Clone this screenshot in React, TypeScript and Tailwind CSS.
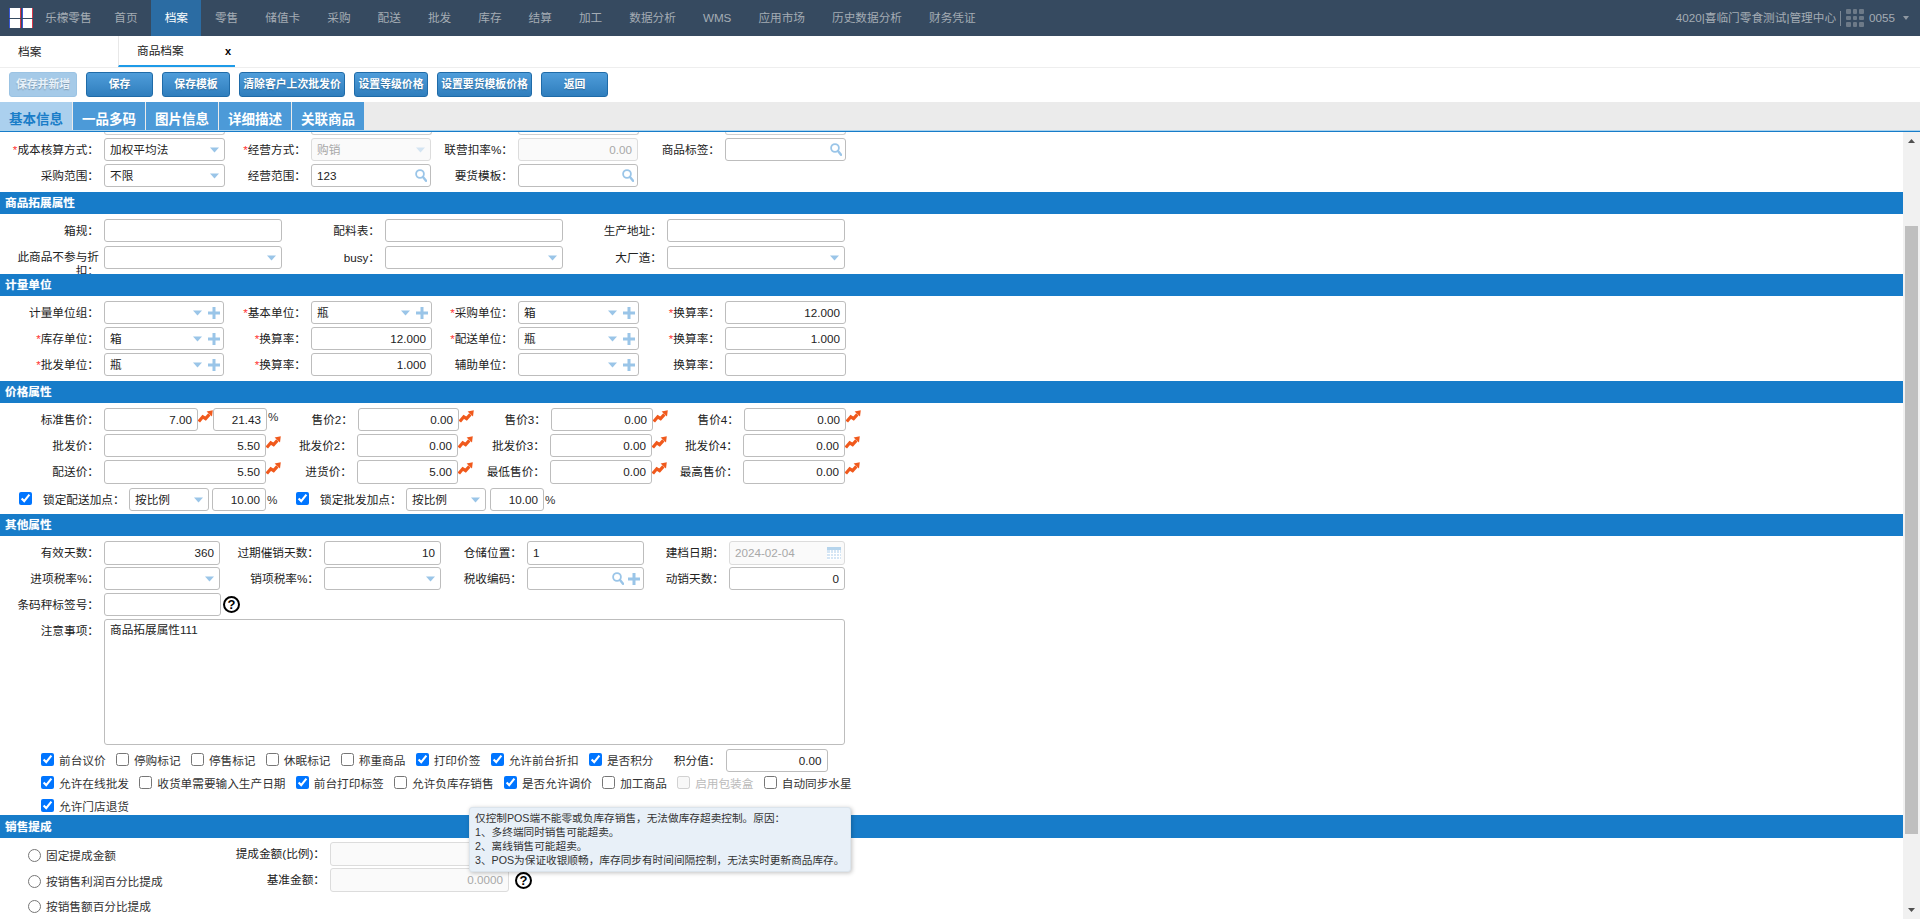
import React from "react";

const BLUE = "#9ac5e8";

function Caret({ light }: { light?: boolean }) {
  return (
    <svg width="9" height="6" viewBox="0 0 9 6" className="shrink-0">
      <path d="M0 0.5h9L4.5 5.5z" fill={light ? "#d3e4f2" : BLUE} />
    </svg>
  );
}
function Plus() {
  return (
    <svg width="12" height="12" viewBox="0 0 12 12" className="shrink-0 ml-[6px] -mr-[2px]">
      <path d="M4.5 0h3v4.5H12v3H7.5V12h-3V7.5H0v-3h4.5z" fill={BLUE} />
    </svg>
  );
}
function Search() {
  return (
    <svg width="12" height="13" viewBox="0 0 12 13" className="shrink-0 -mr-[2px]">
      <circle cx="5" cy="5" r="3.9" fill="none" stroke={BLUE} strokeWidth="1.8" />
      <path d="M8 8l3 3.8" stroke={BLUE} strokeWidth="2.4" strokeLinecap="round" />
    </svg>
  );
}
function Calendar() {
  return (
    <svg width="14" height="13" viewBox="0 0 14 13" className="shrink-0 -mr-[2px]">
      <rect width="14" height="13" fill="#d5e6f5" />
      <rect width="14" height="3" fill="#b5d4ec" />
      {[3, 6, 9, 12].map((x) => (
        <rect key={x} x={x} y="3" width="1" height="10" fill="#fff" />
      ))}
      {[6, 9, 12].map((y) => (
        <rect key={y} x="0" y={y} width="14" height="1" fill="#fff" />
      ))}
    </svg>
  );
}
function Trend() {
  return (
    <svg width="15" height="13" viewBox="0 0 15 13" className="shrink-0 self-start mt-[2px]">
      <path d="M0.8 11.6L4.8 6.8l2.8 1.8L11.4 4.4" fill="none" stroke="#f0591c" strokeWidth="3.2" />
      <path d="M8.6 1.6L14.8 0.2 14 6.4z" fill="#f0591c" />
    </svg>
  );
}
function Help() {
  return (
    <span className="w-[17px] h-[17px] shrink-0 rounded-full border-2 border-black flex items-center justify-center text-[13px] font-bold leading-none text-black">
      ?
    </span>
  );
}

function Inp({
  w,
  v,
  right,
  off,
  icons,
  h = "h-[23px]",
}: {
  w: string;
  v?: string;
  right?: boolean;
  off?: boolean;
  icons?: React.ReactNode;
  h?: string;
}) {
  return (
    <div
      className={`${w} ${h} shrink-0 flex items-center rounded-[3px] border px-[5px] ${
        off ? "border-[#dcdcdc] bg-[#fafafa] text-[#a8a8a8]" : "border-[#bdbdbd] bg-white text-[#222]"
      }`}
    >
      <span className={`flex-1 min-w-0 whitespace-nowrap ${right ? "text-right" : ""}`}>{v}</span>
      {icons && <span className="flex items-center shrink-0 ml-[4px]">{icons}</span>}
    </div>
  );
}

function F({ lw, t, req, children }: { lw: string; t: string; req?: boolean; children?: React.ReactNode }) {
  return (
    <>
      <div className={`${lw} mr-[5px] shrink-0 text-right leading-[14px] text-[#222]`}>
        {req && <span className="text-[#f33]">*</span>}
        {t}：
      </div>
      {children}
    </>
  );
}

function Header({ t, h = "h-[22px]", mt = "mt-[5px]" }: { t: string; h?: string; mt?: string }) {
  return (
    <div
      className={`relative z-10 ${h} ${mt} bg-[#177cc9] flex items-center pl-[5px] font-bold text-white [text-shadow:0_0_1px_rgba(255,255,255,0.4)]`}
    >
      {t}
    </div>
  );
}

function Row({ mt, children, h = "h-[23px]" }: { mt: string; children: React.ReactNode; h?: string }) {
  return <div className={`flex items-center ${h} ${mt}`}>{children}</div>;
}

function Ck({ t, on, off }: { t: string; on?: boolean; off?: boolean }) {
  return (
    <label className={`flex items-center gap-[5px] whitespace-nowrap ${off ? "text-[#bbb]" : "text-[#333]"}`}>
      <input type="checkbox" defaultChecked={on} disabled={off} className="w-[13px] h-[13px] mb-[3px] shrink-0" />
      <span>{t}</span>
    </label>
  );
}

function Radio({ t }: { t: string }) {
  return (
    <label className="w-[200px] shrink-0 pl-[28px] pt-[2px] flex items-center gap-[5px] text-[#333]">
      <input type="radio" name="commission" className="w-[13px] h-[13px] shrink-0" />
      <span className="mt-[1px]">{t}</span>
    </label>
  );
}

const navItems = ["首页", "档案", "零售", "储值卡", "采购", "配送", "批发", "库存", "结算", "加工", "数据分析", "WMS", "应用市场", "历史数据分析", "财务凭证"];
const buttons: [string, string][] = [
  ["保存", "w-[67px]"],
  ["保存模板", "w-[68px]"],
  ["清除客户上次批发价", "w-[106px]"],
  ["设置等级价格", "w-[74px]"],
  ["设置要货模板价格", "w-[95px]"],
  ["返回", "w-[67px]"],
];
const tabs = ["一品多码", "图片信息", "详细描述", "关联商品"];

export default function App() {
  return (
    <div className="h-[919px] w-[1920px] overflow-hidden flex flex-col bg-white text-[11.67px] text-[#222] [font-family:'Liberation_Sans','Noto_Sans_CJK_SC',sans-serif]">
      {/* top bar */}
      <div className="h-[36px] shrink-0 bg-[#364a60] flex items-center text-[#a4acb4]">
        <div className="w-[100.8px] shrink-0 flex items-center pl-[9px]">
          <div className="w-[24px] h-[20px] grid grid-cols-2 gap-[1px]">
            {[0, 1, 2, 3].map((i) => (
              <div key={i} className="bg-white border-l border-l-[#3a58d8] border-r border-r-[#d8384a]" />
            ))}
          </div>
          <span className="ml-[12px] whitespace-nowrap">乐檬零售</span>
        </div>
        {navItems.map((n) => (
          <div
            key={n}
            className={`h-full flex items-center px-[13.5px] whitespace-nowrap ${n === "档案" ? "bg-[#2b6ca3] text-white" : ""}`}
          >
            {n}
          </div>
        ))}
        <div className="ml-auto flex items-center pr-[11px]">
          <span className="whitespace-nowrap">4020|喜临门零食测试|管理中心</span>
          <span className="w-px h-[15px] bg-[#7d8996] ml-[4px] mr-[5px]" />
          <span className="grid grid-cols-3 gap-[2px] w-[18px] h-[18px]">
            {[0, 1, 2, 3, 4, 5, 6, 7, 8].map((i) => (
              <span key={i} className="bg-[#6d7a88] rounded-[1px]" />
            ))}
          </span>
          <span className="ml-[5px]">0055</span>
          <svg width="6" height="4" viewBox="0 0 6 4" className="ml-[8px]">
            <path d="M0 0h6L3 4z" fill="#8f98a2" />
          </svg>
        </div>
      </div>

      {/* page tabs */}
      <div className="h-[32px] shrink-0 flex border-b border-b-[#eeeeee] text-[#222]">
        <div className="w-[118px] flex items-center pl-[18px]">档案</div>
        <div className="w-[117px] flex items-center pl-[18px] border-l border-l-[#e8e8e8] border-b-2 border-b-[#1e9be8] relative">
          商品档案
          <span className="absolute right-[4px] top-[10px] text-[11px] font-bold text-black leading-none">x</span>
        </div>
      </div>

      {/* buttons */}
      <div className="h-[34px] shrink-0 flex items-start pt-[4px] pl-[9px] gap-[9px] text-[10.83px] font-bold text-white [text-shadow:0_1px_1px_rgba(0,0,0,0.25)]">
        <div className="w-[68px] h-[25px] flex items-center justify-center rounded-[3px] bg-[#a5cae8] border border-[#9bc3e3] text-[#e8f2fa]">
          保存并新增
        </div>
        {buttons.map(([t, w]) => (
          <div
            key={t}
            className={`${w} h-[25px] flex items-center justify-center whitespace-nowrap rounded-[3px] border border-[#1f6ba8] bg-gradient-to-b from-[#4f9dda] to-[#2f7ebd]`}
          >
            {t}
          </div>
        ))}
      </div>

      {/* section tabs */}
      <div className="h-[28px] shrink-0 flex bg-[#ebebeb] gap-[1px] text-[13.5px] font-bold leading-none">
        <div className="w-[72px] flex items-center justify-center pt-[8px] bg-[#abd0ee] text-[#1a7dc8]">基本信息</div>
        {tabs.map((t) => (
          <div key={t} className="w-[72px] flex items-center justify-center pt-[8px] bg-[#4c9ad8] text-white">
            {t}
          </div>
        ))}
      </div>
      <div className="h-[2px] shrink-0 border-t border-t-[#a9d3ee] bg-[#177cc9]" />

      {/* body */}
      <div className="flex-1 min-h-0 flex">
        <div className="relative flex-1 min-w-0 overflow-hidden">
          {/* partially scrolled row */}
          <div className="flex h-[3px] pl-[104px] gap-[86px]">
            {[0, 1, 2, 3].map((i) => (
              <div key={i} className="w-[121px] h-[3px] border border-t-0 border-[#cfcfcf] rounded-b-[3px]" />
            ))}
          </div>

          <Row mt="mt-[3px]">
            <F lw="w-[99px]" t="成本核算方式" req>
              <Inp w="w-[121px]" v="加权平均法" icons={<Caret />} />
            </F>
            <F lw="w-[81px]" t="经营方式" req>
              <Inp w="w-[120px]" v="购销" off icons={<Caret light />} />
            </F>
            <F lw="w-[82px]" t="联营扣率%">
              <Inp w="w-[120px]" v="0.00" right off />
            </F>
            <F lw="w-[82px]" t="商品标签">
              <Inp w="w-[121px]" icons={<Search />} />
            </F>
          </Row>
          <Row mt="mt-[3px]">
            <F lw="w-[99px]" t="采购范围">
              <Inp w="w-[121px]" v="不限" icons={<Caret />} />
            </F>
            <F lw="w-[81px]" t="经营范围">
              <Inp w="w-[120px]" v="123" icons={<Search />} />
            </F>
            <F lw="w-[82px]" t="要货模板">
              <Inp w="w-[120px]" icons={<Search />} />
            </F>
          </Row>

          <Header t="商品拓展属性" />
          <Row mt="mt-[5px]">
            <F lw="w-[99px]" t="箱规">
              <Inp w="w-[178px]" />
            </F>
            <F lw="w-[98px]" t="配料表">
              <Inp w="w-[178px]" />
            </F>
            <F lw="w-[99px]" t="生产地址">
              <Inp w="w-[178px]" />
            </F>
          </Row>
          <Row mt="mt-[4px]">
            <div className="w-[87px] ml-[12px] mr-[5px] shrink-0 self-start mt-[4px] text-right leading-[14px] text-[#222]">
              此商品不参与折扣：
            </div>
            <Inp w="w-[178px]" icons={<Caret />} />
            <F lw="w-[98px]" t="busy">
              <Inp w="w-[178px]" icons={<Caret />} />
            </F>
            <F lw="w-[99px]" t="大厂造">
              <Inp w="w-[178px]" icons={<Caret />} />
            </F>
          </Row>

          <Header t="计量单位" />
          <Row mt="mt-[5px]">
            <F lw="w-[99px]" t="计量单位组">
              <Inp w="w-[120px]" icons={<><Caret /><Plus /></>} />
            </F>
            <F lw="w-[82px]" t="基本单位" req>
              <Inp w="w-[121px]" v="瓶" icons={<><Caret /><Plus /></>} />
            </F>
            <F lw="w-[81px]" t="采购单位" req>
              <Inp w="w-[121px]" v="箱" icons={<><Caret /><Plus /></>} />
            </F>
            <F lw="w-[81px]" t="换算率" req>
              <Inp w="w-[121px]" v="12.000" right />
            </F>
          </Row>
          <Row mt="mt-[3px]">
            <F lw="w-[99px]" t="库存单位" req>
              <Inp w="w-[120px]" v="箱" icons={<><Caret /><Plus /></>} />
            </F>
            <F lw="w-[82px]" t="换算率" req>
              <Inp w="w-[121px]" v="12.000" right />
            </F>
            <F lw="w-[81px]" t="配送单位" req>
              <Inp w="w-[121px]" v="瓶" icons={<><Caret /><Plus /></>} />
            </F>
            <F lw="w-[81px]" t="换算率" req>
              <Inp w="w-[121px]" v="1.000" right />
            </F>
          </Row>
          <Row mt="mt-[3px]">
            <F lw="w-[99px]" t="批发单位" req>
              <Inp w="w-[120px]" v="瓶" icons={<><Caret /><Plus /></>} />
            </F>
            <F lw="w-[82px]" t="换算率" req>
              <Inp w="w-[121px]" v="1.000" right />
            </F>
            <F lw="w-[81px]" t="辅助单位">
              <Inp w="w-[121px]" icons={<><Caret /><Plus /></>} />
            </F>
            <F lw="w-[81px]" t="换算率">
              <Inp w="w-[121px]" />
            </F>
          </Row>

          <Header t="价格属性" />
          <Row mt="mt-[5px]">
            <F lw="w-[99px]" t="标准售价">
              <Inp w="w-[94px]" v="7.00" right />
              <Trend />
              <Inp w="w-[54px]" v="21.43" right />
              <span className="w-[15px] shrink-0 self-start pl-[1px] text-[#333]">%</span>
            </F>
            <F lw="w-[71px]" t="售价2">
              <Inp w="w-[101px]" v="0.00" right />
              <Trend />
            </F>
            <F lw="w-[72px]" t="售价3">
              <Inp w="w-[102px]" v="0.00" right />
              <Trend />
            </F>
            <F lw="w-[71px]" t="售价4">
              <Inp w="w-[102px]" v="0.00" right />
              <Trend />
            </F>
          </Row>
          <Row mt="mt-[3px]">
            <F lw="w-[99px]" t="批发价">
              <Inp w="w-[162px]" v="5.50" right />
              <Trend />
            </F>
            <F lw="w-[71px]" t="批发价2">
              <Inp w="w-[101px]" v="0.00" right />
              <Trend />
            </F>
            <F lw="w-[72px]" t="批发价3">
              <Inp w="w-[102px]" v="0.00" right />
              <Trend />
            </F>
            <F lw="w-[71px]" t="批发价4">
              <Inp w="w-[102px]" v="0.00" right />
              <Trend />
            </F>
          </Row>
          <Row mt="mt-[3px]" h="h-[24px]">
            <F lw="w-[99px]" t="配送价">
              <Inp w="w-[162px]" h="h-[24px]" v="5.50" right />
              <Trend />
            </F>
            <F lw="w-[71px]" t="进货价">
              <Inp w="w-[101px]" h="h-[24px]" v="5.00" right />
              <Trend />
            </F>
            <F lw="w-[72px]" t="最低售价">
              <Inp w="w-[102px]" h="h-[24px]" v="0.00" right />
              <Trend />
            </F>
            <F lw="w-[71px]" t="最高售价">
              <Inp w="w-[102px]" h="h-[24px]" v="0.00" right />
              <Trend />
            </F>
          </Row>
          <Row mt="mt-[4px]">
            <input type="checkbox" defaultChecked className="w-[13px] h-[13px] ml-[19px] mr-[11px] mb-[2px] shrink-0" />
            <div className="w-[81px] mr-[5px] shrink-0 whitespace-nowrap text-[#222]">锁定配送加点：</div>
            <Inp w="w-[80px]" v="按比例" icons={<Caret />} />
            <div className="w-[3px] shrink-0" />
            <Inp w="w-[54px]" v="10.00" right />
            <span className="w-[30px] shrink-0 pl-[1px] text-[#333]">%</span>
            <input type="checkbox" defaultChecked className="w-[13px] h-[13px] mr-[11px] mb-[2px] shrink-0" />
            <div className="w-[81px] mr-[5px] shrink-0 whitespace-nowrap text-[#222]">锁定批发加点：</div>
            <Inp w="w-[80px]" v="按比例" icons={<Caret />} />
            <div className="w-[4px] shrink-0" />
            <Inp w="w-[54px]" v="10.00" right />
            <span className="pl-[1px] text-[#333]">%</span>
          </Row>

          <Header t="其他属性" mt="mt-[3px]" />
          <Row mt="mt-[5px]" h="h-[24px]">
            <F lw="w-[99px]" t="有效天数">
              <Inp w="w-[116px]" h="h-[24px]" v="360" right />
            </F>
            <F lw="w-[99px]" t="过期催销天数">
              <Inp w="w-[117px]" h="h-[24px]" v="10" right />
            </F>
            <F lw="w-[81px]" t="仓储位置">
              <Inp w="w-[117px]" h="h-[24px]" v="1" />
            </F>
            <F lw="w-[80px]" t="建档日期">
              <Inp w="w-[116px]" h="h-[24px]" v="2024-02-04" off icons={<Calendar />} />
            </F>
          </Row>
          <Row mt="mt-[2px]">
            <F lw="w-[99px]" t="进项税率%">
              <Inp w="w-[116px]" icons={<Caret />} />
            </F>
            <F lw="w-[99px]" t="销项税率%">
              <Inp w="w-[117px]" icons={<Caret />} />
            </F>
            <F lw="w-[81px]" t="税收编码">
              <Inp w="w-[117px]" icons={<><Search /><Plus /></>} />
            </F>
            <F lw="w-[80px]" t="动销天数">
              <Inp w="w-[116px]" v="0" right />
            </F>
          </Row>
          <Row mt="mt-[3px]">
            <F lw="w-[99px]" t="条码秤标签号">
              <Inp w="w-[117px]" />
            </F>
            <div className="w-[2px] shrink-0" />
            <Help />
          </Row>
          <div className="flex mt-[3px] h-[126px]">
            <div className="w-[99px] mr-[5px] shrink-0 text-right pt-[3px] text-[#222]">注意事项：</div>
            <div className="w-[741px] h-[126px] rounded-[3px] border border-[#bdbdbd] px-[5px] py-[1px] text-[#222]">
              商品拓展属性111
            </div>
          </div>

          <div className="flex items-center h-[23px] mt-[4px] pl-[41px] gap-[10.3px]">
            <Ck t="前台议价" on />
            <Ck t="停购标记" />
            <Ck t="停售标记" />
            <Ck t="休眠标记" />
            <Ck t="称重商品" />
            <Ck t="打印价签" on />
            <Ck t="允许前台折扣" on />
            <Ck t="是否积分" on />
            <div className="flex items-center ml-[4.7px]">
              <div className="w-[52px] mr-[5px] shrink-0 text-right text-[#222]">积分值：</div>
              <Inp w="w-[102px]" v="0.00" right />
            </div>
          </div>
          <div className="flex items-center h-[22px] mt-[1px] pl-[41px] gap-[10.3px]">
            <Ck t="允许在线批发" on />
            <Ck t="收货单需要输入生产日期" />
            <Ck t="前台打印标签" on />
            <Ck t="允许负库存销售" />
            <Ck t="是否允许调价" on />
            <Ck t="加工商品" />
            <Ck t="启用包装盒" off />
            <Ck t="自动同步水星" />
          </div>
          <div className="flex items-center h-[20px] pt-[3px] pl-[41px]">
            <Ck t="允许门店退货" on />
          </div>

          <Header t="销售提成" h="h-[23px]" mt="mt-[0px]" />
          <Row mt="mt-[4px]" h="h-[24px]">
            <Radio t="固定提成金额" />
            <F lw="w-[125px]" t="提成金额(比例)">
              <Inp w="w-[179px]" h="h-[24px]" off />
            </F>
          </Row>
          <Row mt="mt-[2px]" h="h-[24px]">
            <Radio t="按销售利润百分比提成" />
            <F lw="w-[125px]" t="基准金额">
              <Inp w="w-[179px]" h="h-[24px]" v="0.0000" right off />
            </F>
            <div className="w-[6px] shrink-0" />
            <Help />
          </Row>
          <Row mt="mt-[1px]" h="h-[24px]">
            <Radio t="按销售额百分比提成" />
          </Row>

          {/* tooltip */}
          <div className="absolute z-20 left-[469px] top-[675px] w-[382px] h-[65px] rounded-[3px] bg-[#e8f0f8] border border-[#dbe4ec] shadow-[1px_1px_4px_rgba(0,0,0,0.25)] px-[5px] py-[3px] text-[10.67px] leading-[14px] text-[#333] whitespace-nowrap">
            <div>仅控制POS端不能零或负库存销售，无法做库存超卖控制。原因：</div>
            <div>1、多终端同时销售可能超卖。</div>
            <div>2、离线销售可能超卖。</div>
            <div>3、POS为保证收银顺畅，库存同步有时间间隔控制，无法实时更新商品库存。</div>
          </div>
        </div>

        {/* scrollbar */}
        <div className="w-[17px] shrink-0 bg-[#f1f1f1] flex flex-col items-center">
          <svg width="7" height="4" viewBox="0 0 7 4" className="mt-[7px]">
            <path d="M3.5 0L7 4H0z" fill="#505050" />
          </svg>
          <div className="w-[13px] h-[608px] mt-[83px] bg-[#bfbfbf]" />
          <svg width="7" height="4" viewBox="0 0 7 4" className="mt-auto mb-[7px]">
            <path d="M0 0h7L3.5 4z" fill="#505050" />
          </svg>
        </div>
      </div>
    </div>
  );
}
